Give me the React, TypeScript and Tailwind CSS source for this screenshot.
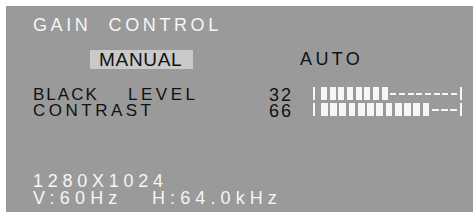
import React from 'react';

const Bar: React.FC<{ filled: number; total: number }> = ({ filled, total }) => {
  const segs = Array.from({ length: total }, (_, i) => i < filled);
  return (
    <div className="flex items-stretch h-[13px] w-[149px]">
      <div className="w-[2px] bg-[#f6f6f6]" />
      <div className="ml-[6px] mr-[3px] flex-1 flex gap-[2.5px]">
        {segs.map((on, i) =>
          on ? (
            <div key={i} className="flex-1 h-full bg-[#f6f6f6]" />
          ) : (
            <div key={i} className="flex-1 h-[2px] self-center bg-[#f6f6f6]" />
          )
        )}
      </div>
      <div className="w-[2px] bg-[#f6f6f6]" />
    </div>
  );
};

export default function App() {
  return (
    <div className="w-[473px] h-[212px] bg-white pt-[6px] pl-[6px] font-['Liberation_Sans',Arial,sans-serif]">
      <div className="h-full bg-[#9a9a9a] pl-[27px] pt-[10px] flex flex-col">
        {/* title */}
        <div className="h-[18px] leading-[18px] text-[18px] text-[#f6f6f6] tracking-[3.6px] whitespace-pre">
          GAIN  CONTROL
        </div>

        {/* mode */}
        <div className="mt-[16px] h-[19px] flex text-[18px] leading-[19px] text-[#111]">
          <div className="ml-[57px] w-[103px] h-[19px] bg-[#c9c9c9] pl-[9px] text-[19px] tracking-[0.7px]">MANUAL</div>
          <div className="ml-[107px] tracking-[3.4px]">AUTO</div>
        </div>

        {/* levels */}
        <div className="mt-[18px] flex flex-col text-[17px] leading-[16px] text-[#111]">
          <div className="flex items-start h-[16px]">
            <div className="w-[236px] whitespace-nowrap">
              <span className="inline-block w-[95px] tracking-[2px]">BLACK</span>
              <span className="tracking-[3.5px]">LEVEL</span>
            </div>
            <div className="w-[44px] text-[18px] tracking-[2px]">32</div>
            <Bar filled={8} total={16} />
          </div>
          <div className="flex items-start h-[16px]">
            <div className="w-[236px] tracking-[3.5px]">CONTRAST</div>
            <div className="w-[44px] text-[18px] tracking-[2px]">66</div>
            <Bar filled={12} total={15} />
          </div>
        </div>

        {/* timing */}
        <div className="mt-[54px] text-[18px] leading-[17px] text-[#f6f6f6]">
          <div className="h-[17px] tracking-[4.75px]">1280X1024</div>
          <div className="h-[17px] whitespace-nowrap">
            <span className="inline-block w-[119px] tracking-[5.2px]">V:60Hz</span>
            <span className="tracking-[5.1px]">H:64.0kHz</span>
          </div>
        </div>
      </div>
    </div>
  );
}
